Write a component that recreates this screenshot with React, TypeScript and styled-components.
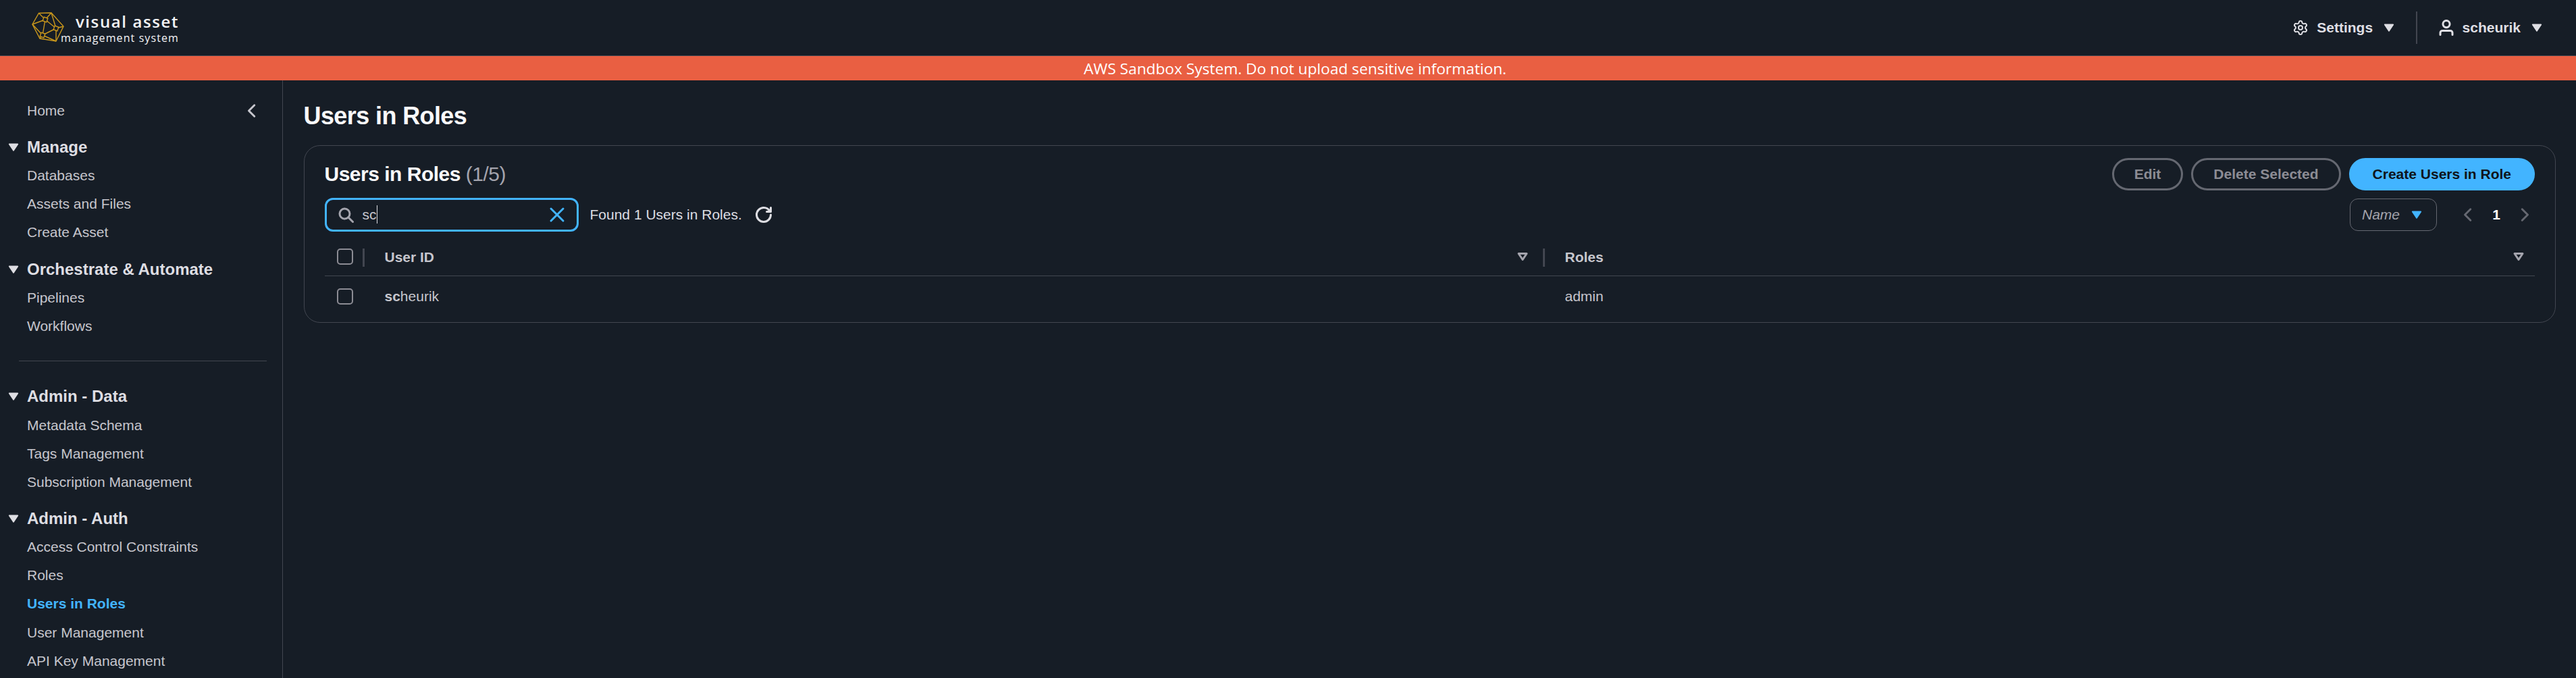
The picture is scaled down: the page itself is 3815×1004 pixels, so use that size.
import React from "react"
import styled, { createGlobalStyle } from "styled-components"
import { Settings } from "lucide-react"

const GlobalStyle = createGlobalStyle`
  html, body {
    margin: 0;
    height: 100%;
    overflow: hidden;
    background: #161d26;
    font-family: "Liberation Sans", Arial, sans-serif;
  }
  #root {
    height: 100%;
  }
`

const Page = styled.div`
  display: flex;
  flex-direction: column;
  height: 100vh;
  overflow: hidden;
  color: #c6c6cd;
`

const TopBar = styled.header`
  display: flex;
  align-items: center;
  justify-content: space-between;
  box-sizing: border-box;
  height: 83px;
  flex: none;
  padding: 0 46px 0 47px;
  border-bottom: 1.5px solid #424650;
`

const Brand = styled.div`
  display: flex;
  align-items: flex-start;
  position: relative;
  width: 218px;
  height: 50px;
  margin-top: -3px;
`

const BrandText = styled.div`
  display: flex;
  flex-direction: column;
  align-items: flex-end;
  margin-left: auto;
  color: #f4f4f6;
  font-family: "Open Sans", "Noto Sans", sans-serif;
`

const BrandTitle = styled.span`
  font-size: 24px;
  line-height: 28px;
  font-weight: 600;
  letter-spacing: 1.6px;
  margin-top: 3px;
`

const BrandSub = styled.span`
  font-size: 16px;
  line-height: 20px;
  letter-spacing: 1.1px;
`

const LogoMark = styled.svg`
  position: absolute;
  left: 0;
  top: 3px;
`

const TopActions = styled.nav`
  display: flex;
  align-items: center;
`

const TopItem = styled.div`
  display: flex;
  align-items: center;
  gap: 12px;
  color: #dedee3;
  font-size: 21px;
  font-weight: 700;
`

const TopDivider = styled.span`
  width: 1.5px;
  height: 48px;
  background: #424650;
  margin: 0 31px 0 28px;
`

const Banner = styled.div`
  flex: none;
  box-sizing: border-box;
  height: 36px;
  padding-left: 21px;
  background: #e95f42;
  color: #fff;
  font-family: "Open Sans", "Noto Sans", sans-serif;
  font-size: 22.7px;
  line-height: 38px;
  text-align: center;
`

const Body = styled.div`
  display: flex;
  flex: 1;
  min-height: 0;
`

const Sidebar = styled.aside`
  flex: none;
  box-sizing: border-box;
  width: 418.5px;
  padding-top: 24px;
  border-right: 1.5px solid #424650;
  overflow: hidden;
`

const HomeRow = styled.div`
  display: flex;
  align-items: center;
  justify-content: space-between;
  height: 42px;
  padding: 0 33px 0 40px;
  font-size: 21px;
`

const NavSection = styled.section`
  margin-top: 12px;
`

const NavHeading = styled.div`
  display: flex;
  align-items: center;
  gap: 8px;
  height: 42px;
  padding-left: 8px;
  color: #dedee3;
  font-size: 24px;
  font-weight: 700;
`

const NavItem = styled.a<{ $active?: boolean }>`
  display: flex;
  align-items: center;
  height: 42.2px;
  padding-left: 40px;
  font-size: 21px;
  font-weight: ${(p) => (p.$active ? 700 : 400)};
  color: ${(p) => (p.$active ? "#42b4ff" : "#c6c6cd")};
`

const NavDivider = styled.hr`
  height: 1.5px;
  margin: 30px 23px 31px 28px;
  border: 0;
  background: #424650;
`

const Main = styled.main`
  flex: 1;
  min-width: 0;
  box-sizing: border-box;
  padding: 29px 30px 0 31px;
`

const PageTitle = styled.h1`
  margin: 0 0 19px;
  color: #f9f9fa;
  font-size: 36px;
  line-height: 48px;
  font-weight: 700;
  letter-spacing: -0.6px;
`

const Card = styled.section`
  box-sizing: border-box;
  height: 263px;
  padding: 18px 30px 0;
  border: 1.5px solid #424650;
  border-radius: 24px;
`

const CardHead = styled.div`
  display: flex;
  align-items: center;
  justify-content: space-between;
  height: 48px;
`

const CardTitle = styled.h2`
  margin: 0;
  color: #f9f9fa;
  font-size: 30px;
  line-height: 48px;
  font-weight: 700;
  letter-spacing: -0.5px;
`

const Counter = styled.span`
  color: #a4a4ad;
  font-weight: 400;
`

const ButtonRow = styled.div`
  display: flex;
  gap: 12px;
`

const Button = styled.button<{ $primary?: boolean }>`
  box-sizing: border-box;
  height: 48px;
  padding: 0 ${(p) => (p.$primary ? 32 : 30)}px;
  border: 3px solid ${(p) => (p.$primary ? "#42b4ff" : "#656871")};
  border-radius: 30px;
  background: ${(p) => (p.$primary ? "#42b4ff" : "transparent")};
  color: ${(p) => (p.$primary ? "#0f141a" : "#8c8c94")};
  font-family: inherit;
  font-size: 21px;
  font-weight: 700;
`

const Toolbar = styled.div`
  display: flex;
  align-items: center;
  justify-content: space-between;
  height: 50px;
  margin-top: 11px;
`

const FilterGroup = styled.div`
  display: flex;
  align-items: center;
`

const SearchBox = styled.div`
  display: flex;
  align-items: center;
  box-sizing: border-box;
  width: 376px;
  height: 50px;
  padding: 0 17px 0 16px;
  border: 3px solid #42b4ff;
  border-radius: 12px;
`

const SearchValue = styled.span`
  flex: 1;
  margin-left: 13px;
  color: #c6c6cd;
  font-size: 21px;
  line-height: 30px;
`

const TextCaret = styled.span`
  display: inline-block;
  width: 1.5px;
  height: 27px;
  vertical-align: -6px;
  background: #dedee3;
`

const FoundText = styled.span`
  margin: 0 20px 0 17px;
  color: #dedee3;
  font-size: 21px;
`

const PagerGroup = styled.div`
  display: flex;
  align-items: center;
  gap: 34px;
  padding-right: 3px;
`

const SortSelect = styled.div`
  display: flex;
  align-items: center;
  justify-content: space-between;
  box-sizing: border-box;
  width: 129px;
  height: 48px;
  padding: 0 17px;
  border: 1.5px solid #656871;
  border-radius: 12px;
  color: #a4a4ad;
  font-size: 21px;
  font-style: italic;
`

const Pager = styled.div`
  display: flex;
  align-items: center;
  gap: 18px;
  color: #656871;
`

const PageNumber = styled.span`
  width: 24px;
  color: #fff;
  font-size: 21px;
  font-weight: 700;
  text-align: center;
`

const TableGrid = styled.div`
  display: grid;
  grid-template-columns: 59px 1748px 1fr;
  margin-top: 8px;
`

const HeadCell = styled.div<{ $divider?: boolean; $first?: boolean }>`
  display: flex;
  align-items: center;
  justify-content: space-between;
  position: relative;
  height: 57px;
  padding: 0 ${(p) => (p.$first ? 0 : 12)}px 0 ${(p) => (p.$first ? 18 : 30)}px;
  border-bottom: 1.5px solid #424650;
  color: #c6c6cd;
  font-size: 21px;
  font-weight: 700;

  ${(p) =>
    p.$divider &&
    `&::after {
      content: "";
      position: absolute;
      right: 0;
      top: 17px;
      width: 3px;
      height: 27px;
      background: #424650;
    }`}
`

const UserHead = styled(HeadCell)`
  padding-right: 21px;
`

const HeadLabel = styled.span`
  padding-top: 3px;
`

const BodyCell = styled.div<{ $first?: boolean }>`
  display: flex;
  align-items: center;
  height: 60px;
  padding-left: ${(p) => (p.$first ? 18 : 30)}px;
  color: #c6c6cd;
  font-size: 21px;
`

const Match = styled.strong`
  font-weight: 700;
`

const CheckBox = styled.span`
  box-sizing: border-box;
  width: 24px;
  height: 24px;
  border: 2px solid #8c8c94;
  border-radius: 5px;
`

const Icon: React.FC<{ size?: number; color?: string; children: React.ReactNode }> = ({
  size = 24,
  color = "currentColor",
  children,
}) => (
  <svg
    width={size}
    height={size}
    viewBox="0 0 16 16"
    fill="none"
    stroke={color}
    strokeWidth={2}
    strokeLinecap="round"
    strokeLinejoin="round"
    style={{ flex: "none", display: "block" }}
  >
    {children}
  </svg>
)

const CaretDown: React.FC<{ color?: string }> = ({ color = "#dedee3" }) => (
  <svg width={24} height={24} viewBox="0 0 16 16" style={{ flex: "none", display: "block" }}>
    <path d="M4 5h8l-4 6-4-6z" fill={color} stroke={color} strokeWidth={1.5} strokeLinejoin="round" />
  </svg>
)

const SortCaret: React.FC = () => (
  <svg width={24} height={24} viewBox="0 0 16 16" style={{ flex: "none", display: "block" }}>
    <path d="M4 5h8l-4 6-4-6z" fill="none" stroke="#a4a4ad" strokeWidth={2} strokeLinejoin="round" />
  </svg>
)

const Logo: React.FC = () => (
  <LogoMark width={48} height={44} viewBox="0 0 48 44" fill="none" stroke="#c9971c" strokeWidth={1.4}>
    <path d="M1 18 10.500 1.500 29 1l18 20-11 22-24-4L1 18z" />
    <path d="M20 11 10.500 1.500M20 11 29 1M20 11 1 18M20 11l16 13M20 11l-4 23M36 24l11-3M36 24 29 1M36 24 16 34M36 24v19M16 34 1 18M16 34l-4 5M16 34l20 9" />
    <rect x="17" y="8" width="6" height="6" transform="rotate(20 20 11)" fill="#161d26" />
    <rect x="33" y="21" width="6" height="6" transform="rotate(20 36 24)" fill="#161d26" />
    <rect x="13" y="31" width="6" height="6" transform="rotate(20 16 34)" fill="#161d26" />
  </LogoMark>
)

const sections = [
  { title: "Manage", items: ["Databases", "Assets and Files", "Create Asset"] },
  { title: "Orchestrate & Automate", items: ["Pipelines", "Workflows"] },
]

const adminSections = [
  { title: "Admin - Data", items: ["Metadata Schema", "Tags Management", "Subscription Management"] },
  {
    title: "Admin - Auth",
    items: ["Access Control Constraints", "Roles", "Users in Roles", "User Management", "API Key Management"],
  },
]

const renderSection = (section: { title: string; items: string[] }) => (
  <NavSection key={section.title}>
    <NavHeading>
      <CaretDown />
      {section.title}
    </NavHeading>
    {section.items.map((item) => (
      <NavItem key={item} $active={item === "Users in Roles"}>
        {item}
      </NavItem>
    ))}
  </NavSection>
)

export default function App() {
  return (
    <Page>
      <GlobalStyle />
      <TopBar>
        <Brand>
          <Logo />
          <BrandText>
            <BrandTitle>visual asset</BrandTitle>
            <BrandSub>management system</BrandSub>
          </BrandText>
        </Brand>
        <TopActions>
          <TopItem>
            <Settings size={24} strokeWidth={2} />
            Settings
            <CaretDown />
          </TopItem>
          <TopDivider />
          <TopItem>
            <Icon>
              <path d="M4.610 4.390C4.610 2.520 6.130 1 8 1s3.390 1.520 3.390 3.390S9.870 7.780 8 7.780 4.610 6.260 4.610 4.390Z" />
              <path d="M2 15v-2c0-1.100.9-2 2-2h8c1.100 0 2 .9 2 2v2" />
            </Icon>
            scheurik
            <CaretDown />
          </TopItem>
        </TopActions>
      </TopBar>
      <Banner>AWS Sandbox System. Do not upload sensitive information.</Banner>
      <Body>
        <Sidebar>
          <HomeRow>
            Home
            <Icon>
              <path d="M10.500 2.500 5 8l5.500 5.500" />
            </Icon>
          </HomeRow>
          {sections.map(renderSection)}
          <NavDivider />
          {adminSections.map(renderSection)}
        </Sidebar>
        <Main>
          <PageTitle>Users in Roles</PageTitle>
          <Card>
            <CardHead>
              <CardTitle>
                Users in Roles <Counter>(1/5)</Counter>
              </CardTitle>
              <ButtonRow>
                <Button>Edit</Button>
                <Button>Delete Selected</Button>
                <Button $primary>Create Users in Role</Button>
              </ButtonRow>
            </CardHead>
            <Toolbar>
              <FilterGroup>
                <SearchBox>
                  <Icon color="#a4a4ad">
                    <circle cx="7" cy="7" r="5" />
                    <path d="m15 15-4.500-4.500" />
                  </Icon>
                  <SearchValue>
                    sc
                    <TextCaret />
                  </SearchValue>
                  <Icon color="#42b4ff">
                    <path d="m2 2 12 12M14 2 2 14" />
                  </Icon>
                </SearchBox>
                <FoundText>Found 1 Users in Roles.</FoundText>
                <Icon color="#dedee3">
                  <path d="M15 8c0 3.870-3.130 7-7 7s-7-3.130-7-7 3.130-7 7-7c2.790 0 5.200 1.630 6.330 4" />
                  <path d="M15 1v4h-4" />
                </Icon>
              </FilterGroup>
              <PagerGroup>
                <SortSelect>
                  Name
                  <CaretDown color="#42b4ff" />
                </SortSelect>
                <Pager>
                  <Icon>
                    <path d="M10.500 2.500 5 8l5.500 5.500" />
                  </Icon>
                  <PageNumber>1</PageNumber>
                  <Icon>
                    <path d="M5.500 2.500 11 8l-5.500 5.500" />
                  </Icon>
                </Pager>
              </PagerGroup>
            </Toolbar>
            <TableGrid>
              <HeadCell $first $divider>
                <CheckBox />
              </HeadCell>
              <UserHead $divider>
                <HeadLabel>User ID</HeadLabel>
                <SortCaret />
              </UserHead>
              <HeadCell>
                <HeadLabel>Roles</HeadLabel>
                <SortCaret />
              </HeadCell>
              <BodyCell $first>
                <CheckBox />
              </BodyCell>
              <BodyCell>
                <span>
                  <Match>sc</Match>heurik
                </span>
              </BodyCell>
              <BodyCell>admin</BodyCell>
            </TableGrid>
          </Card>
        </Main>
      </Body>
    </Page>
  )
}
